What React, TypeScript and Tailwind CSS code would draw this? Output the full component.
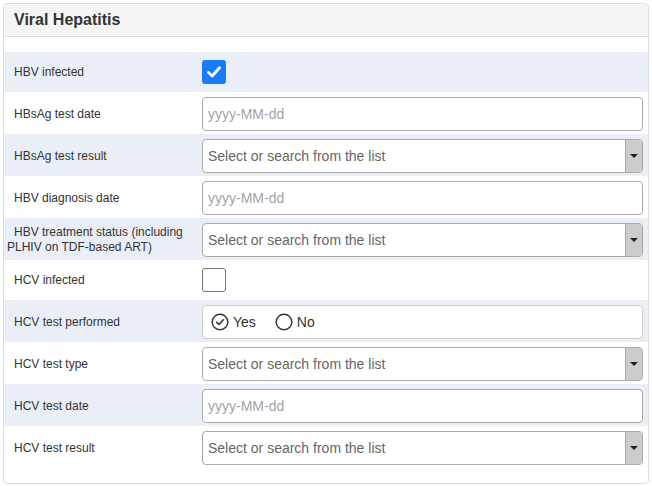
import React from "react";

type Field =
  | { label: string; kind: "check"; checked: boolean }
  | { label: string; kind: "date" }
  | { label: string; kind: "select" }
  | { label: string; kind: "radio" };

const fields: Field[] = [
  { label: "HBV infected", kind: "check", checked: true },
  { label: "HBsAg test date", kind: "date" },
  { label: "HBsAg test result", kind: "select" },
  { label: "HBV diagnosis date", kind: "date" },
  { label: "HBV treatment status (including PLHIV on TDF-based ART)", kind: "select" },
  { label: "HCV infected", kind: "check", checked: false },
  { label: "HCV test performed", kind: "radio" },
  { label: "HCV test type", kind: "select" },
  { label: "HCV test date", kind: "date" },
  { label: "HCV test result", kind: "select" },
];

function Control({ field }: { field: Field }) {
  if (field.kind === "check") {
    return field.checked ? (
      <div className="w-6 h-6 rounded-[3px] bg-[#1a7cf4] flex items-center justify-center">
        <svg width="16" height="16" viewBox="0 0 16 16" fill="none">
          <path d="M2.5 8.5 L6.2 12 L13.5 3.8" stroke="white" strokeWidth="2.8" strokeLinecap="round" strokeLinejoin="round" />
        </svg>
      </div>
    ) : (
      <div className="w-6 h-6 rounded-[3px] border border-[#767676] bg-white" />
    );
  }
  if (field.kind === "date") {
    return (
      <div className="h-[34px] w-full border border-[#aaa] rounded-[4px] bg-white flex items-center px-[5px] text-[14px] text-[#a3a3a3]">
        yyyy-MM-dd
      </div>
    );
  }
  if (field.kind === "select") {
    return (
      <div className="h-[34px] w-full border border-[#aaa] rounded-[4px] bg-white flex items-stretch overflow-hidden">
        <div className="flex-1 flex items-center px-[5px] text-[14px] text-[#666]">Select or search from the list</div>
        <div className="w-[17px] bg-[#ccc] border-l border-[#aaa] flex items-center justify-center">
          <div className="w-0 h-0 border-l-[4px] border-r-[4px] border-t-[4px] border-l-transparent border-r-transparent border-t-[#222]" />
        </div>
      </div>
    );
  }
  return (
    <div className="h-[34px] w-full border border-[#ccc] rounded-[4px] bg-white flex items-center pl-[8px] text-[14px] text-[#333]">
      <svg width="18" height="18" viewBox="0 0 18 18" fill="none" className="mr-[4px]">
        <circle cx="9" cy="9" r="7.8" stroke="#333" strokeWidth="1.4" />
        <path d="M5.6 9.3 L7.9 11.5 L12.4 6.8" stroke="#333" strokeWidth="1.6" strokeLinecap="round" strokeLinejoin="round" />
      </svg>
      <span>Yes</span>
      <svg width="18" height="18" viewBox="0 0 18 18" fill="none" className="ml-[19px] mr-[4px]">
        <circle cx="9" cy="9" r="7.8" stroke="#333" strokeWidth="1.4" />
      </svg>
      <span>No</span>
    </div>
  );
}

export default function App() {
  return (
    <div className="bg-white w-[652px] h-[486px] pt-[3px] pl-[3px]" style={{ fontFamily: '"Liberation Sans", Arial, sans-serif' }}>
      <div className="w-[646px] h-[481px] border border-[#ddd] rounded-[4px] overflow-hidden">
        <div className="h-[33px] bg-[#f5f5f5] border-b border-[#ddd] flex items-center px-[10px]">
          <h3 className="text-[16px] font-bold text-[#333]">Viral Hepatitis</h3>
        </div>
        <div className="pt-[15px]">
          {fields.map((f, i) => (
            <div
              key={f.label}
              className={`flex items-center ${f.kind === "check" ? "h-[40px]" : "h-[42px] pt-[2px]"} ${i % 2 === 0 ? "bg-[#eaeff7]" : "bg-white"}`}
            >
              <div className="w-[198px] shrink-0 pl-[3px] pr-[10px] indent-[7px] text-[12px] leading-[15px] text-[#333]">
                {f.label}
              </div>
              <div className="flex-1 pr-[5px]">
                <Control field={f} />
              </div>
            </div>
          ))}
        </div>
      </div>
    </div>
  );
}
